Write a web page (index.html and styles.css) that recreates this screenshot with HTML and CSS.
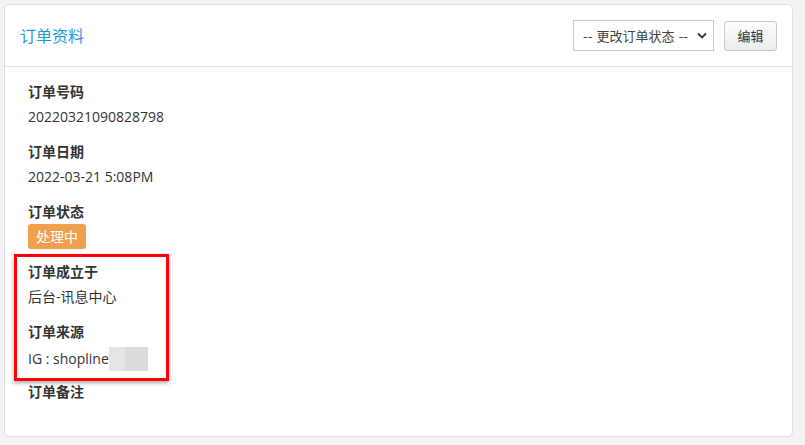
FILE: index.html
```html
<!DOCTYPE html>
<html lang="zh">
<head>
<meta charset="utf-8">
<title>订单资料</title>
<link rel="stylesheet" href="styles.css">
</head>
<body>
<div class="card">
  <div class="card-header">
    <h2 class="card-title">订单资料</h2>
    <div class="actions">
      <div class="select">
        <span class="select-text">-- 更改订单状态 --</span>
        <svg class="chevron" width="10" height="7" viewBox="0 0 10 7"><path d="M1 1.5 L5 5.5 L9 1.5" fill="none" stroke="#333" stroke-width="1.8"/></svg>
      </div>
      <button class="btn">编辑</button>
    </div>
  </div>
  <div class="card-body">
    <div class="field">
      <div class="label">订单号码</div>
      <div class="value">20220321090828798</div>
    </div>
    <div class="field">
      <div class="label">订单日期</div>
      <div class="value">2022-03-21 5:08PM</div>
    </div>
    <div class="field field-status">
      <div class="label">订单状态</div>
      <span class="badge">处理中</span>
    </div>
    <div class="field">
      <div class="label">订单成立于</div>
      <div class="value">后台-讯息中心</div>
    </div>
    <div class="field field-source">
      <div class="label">订单来源</div>
      <div class="value">IG : shopline<span class="redact"><span class="redact-a"></span><span class="redact-b"></span></span></div>
    </div>
    <div class="field">
      <div class="label">订单备注</div>
    </div>
    <div class="highlight"></div>
  </div>
</div>
</body>
</html>
```

FILE: styles.css
```css
html, body {
  margin: 0;
  padding: 0;
  background: #f3f3f3;
}
body {
  padding: 4px 12px 8px 4px;
  font-family: "Open Sans", "Noto Sans CJK SC", sans-serif;
  font-size: 14px;
  color: #333;
}
.card {
  position: relative;
  box-sizing: border-box;
  width: 789px;
  height: 433px;
  background: #fff;
  border: 1px solid #dedede;
  border-radius: 5px;
}
.card-header {
  display: flex;
  align-items: center;
  justify-content: space-between;
  height: 61px;
  padding: 0 15px 0 15px;
  border-bottom: 1px solid #e3e3e3;
}
.card-title {
  margin: 0;
  font-size: 16px;
  font-weight: normal;
  color: #1d9ad6;
  line-height: 20px;
  padding-top: 1px;
}
.actions {
  display: flex;
  align-items: center;
  gap: 10px;
}
.select {
  box-sizing: border-box;
  width: 141px;
  height: 31px;
  border: 1px solid #c9c9c9;
  background: #fff;
  display: flex;
  align-items: center;
  justify-content: space-between;
  padding: 0 6px 0 9px;
  font-family: "DejaVu Sans", "Noto Sans CJK SC", sans-serif;
  font-size: 13px;
  color: #444;
}
.chevron {
  display: block;
}
.btn {
  box-sizing: border-box;
  width: 53px;
  height: 30px;
  border: 1px solid #c8c8c8;
  border-radius: 3px;
  background: linear-gradient(#fdfdfd, #ececec);
  font-family: "Noto Sans CJK SC", sans-serif;
  font-size: 13px;
  color: #333;
  padding: 0;
}
.card-body {
  padding: 15px 23px 0 23px;
}
.field {
  margin-bottom: 15px;
}
.label {
  font-weight: bold;
  line-height: 20px;
  margin-bottom: 5px;
}
.value {
  line-height: 20px;
}
.field-status {
  margin-bottom: 13px;
}
.field-status .label {
  margin-bottom: 2px;
}
.badge {
  display: inline-block;
  height: 25px;
  line-height: 25px;
  padding: 0 8px;
  background: #f0a04c;
  color: #fff;
  border-radius: 3px;
}
.field-source {
  margin-bottom: 11px;
}
.field-source .value {
  display: flex;
  align-items: center;
  height: 24px;
}
.redact {
  display: inline-flex;
  height: 24px;
}
.redact-a {
  width: 16px;
  background: #e5e5e7;
}
.redact-b {
  width: 23px;
  background: #dcdcde;
}
.highlight {
  position: absolute;
  left: 9px;
  top: 249px;
  width: 155px;
  height: 127px;
  box-sizing: border-box;
  border: 3px solid #fb0007;
  box-shadow: 0 2px 4px rgba(0, 0, 0, 0.35);
  pointer-events: none;
}
```
